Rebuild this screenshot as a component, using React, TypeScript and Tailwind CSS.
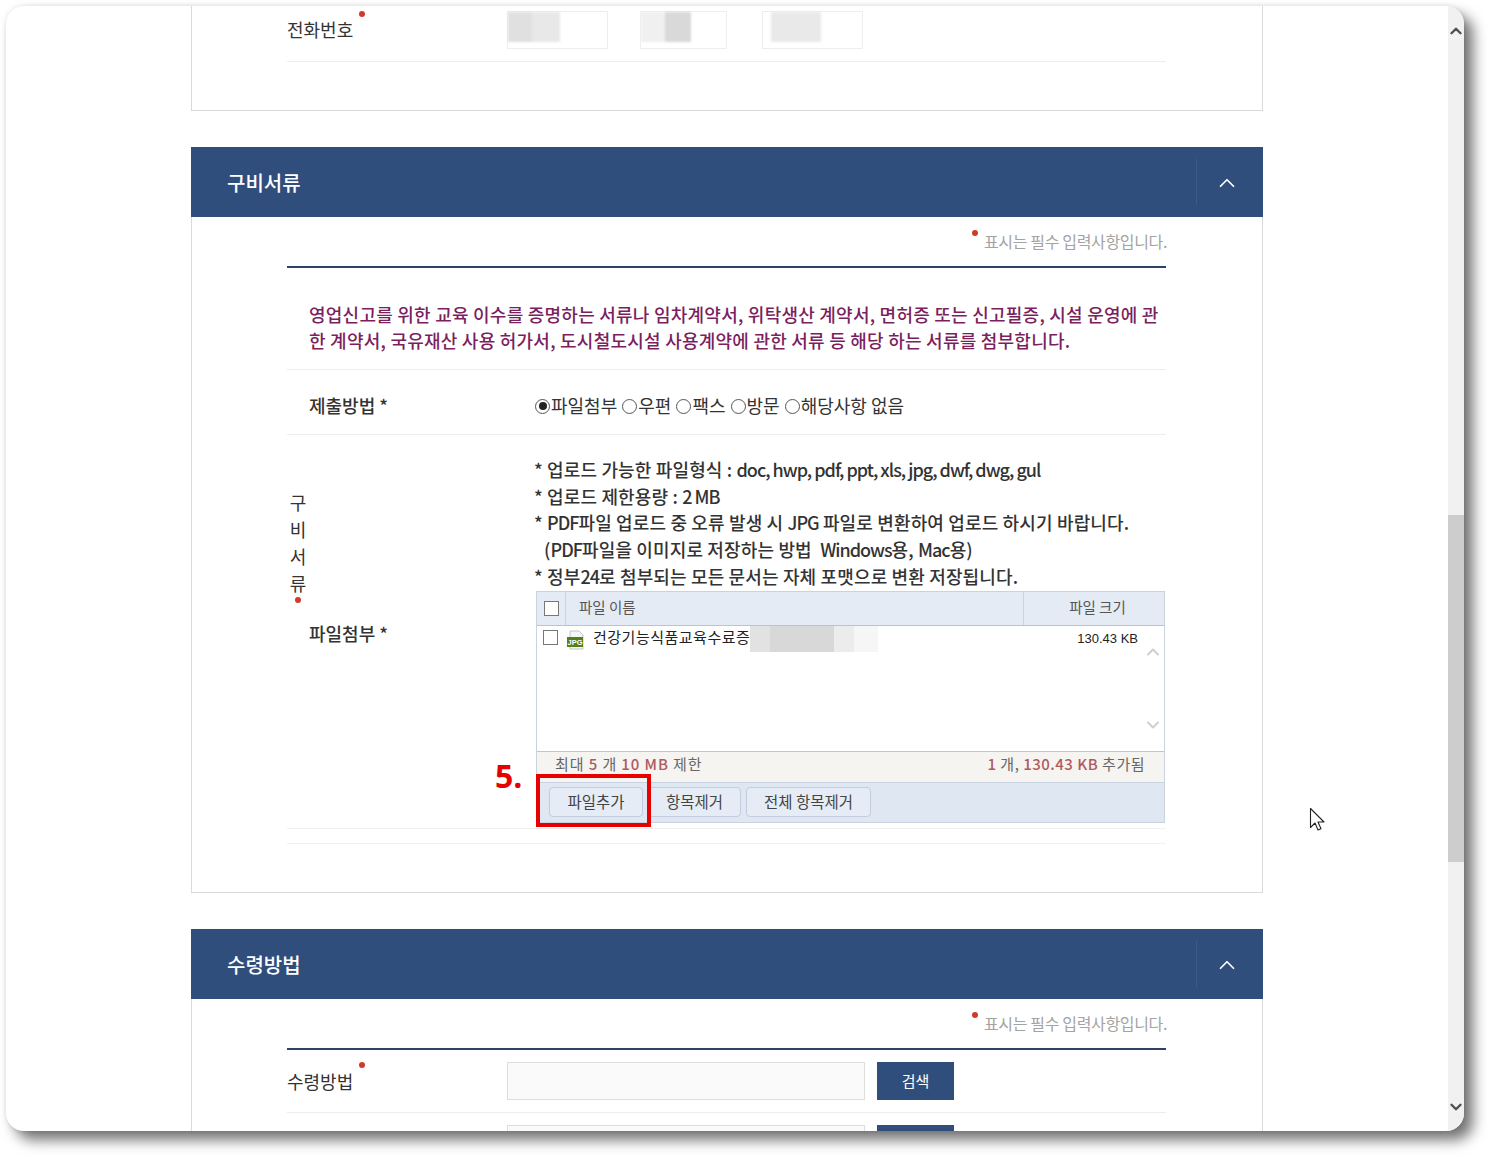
import { ChevronDown, ChevronUp } from "lucide-react";

const fontStack = { fontFamily: '"Noto Sans CJK KR", "Noto Sans", sans-serif' };

function RedDot({ className = "" }: { className?: string }) {
    return <span className={`block h-[6px] w-[6px] rounded-full bg-[#d0392b] ${className}`} />;
}

function SectionHeader({ title }: { title: string }) {
    return (
        <div className="flex h-[70px] items-center justify-between bg-[#304e7c] pl-9">
            <h2 className="pt-[1px] text-[20px] font-medium text-white">{title}</h2>
            <div className="flex h-[46px] w-[67px] items-center justify-center border-l border-[#3d5b89] pr-[7px] pt-[2px]">
                <ChevronUp className="h-[26px] w-[26px] text-white" strokeWidth={1.6} />
            </div>
        </div>
    );
}

function RequiredNote() {
    return (
        <div className="flex h-[51px] items-start justify-end border-b-2 border-[#2c4364] pt-[13px]">
            <RedDot className="mr-[6px]" />
            <span className="-mr-px text-[16px] leading-[22px] tracking-[-0.35px] text-[#a3a3a3]">
                표시는 필수 입력사항입니다.
            </span>
        </div>
    );
}

function Radio({ label, checked = false }: { label: string; checked?: boolean }) {
    return (
        <span className="flex items-center">
            <span className="mt-[2px] flex h-[15px] w-[15px] items-center justify-center rounded-full border border-[#555] bg-white">
                {checked && <span className="h-[8px] w-[8px] rounded-full bg-[#222]" />}
            </span>
            <span className="ml-px">{label}</span>
        </span>
    );
}

function CheckBox() {
    return <span className="block h-[15px] w-[15px] border border-[#777] bg-white" />;
}

function JpgIcon() {
    return (
        <svg width="20" height="20" viewBox="0 0 20 20">
            <path d="M4 1h9l4 4v14H4z" fill="#f6f6f6" stroke="#c4c4c4" />
            <rect x="1" y="7" width="16" height="10" fill="#557f17" />
            <text x="9" y="14.8" textAnchor="middle" fontSize="7.5" fontWeight="700" fill="#fff" fontFamily="Liberation Sans">
                JPG
            </text>
        </svg>
    );
}

function ToolButton({ label, width }: { label: string; width: string }) {
    return (
        <button className={`h-[30px] rounded-[4px] border border-[#c3cddb] bg-[#e6ecf5] text-[15.5px] text-[#444] ${width}`}>
            {label}
        </button>
    );
}

function Latin({ children }: { children: React.ReactNode }) {
    return <span className="tracking-[-1px]">{children}</span>;
}

function FileUploader() {
    return (
        <div className="relative w-[629px] border border-[#c8d2e0] text-[#333]">
            <div className="flex h-[34px] border-b border-[#b9c3d1] bg-[#e4ebf5] text-[14.5px] text-[#555]">
                <div className="flex w-[29px] items-center justify-center border-r border-[#c8d2e0] pl-[1px]">
                    <CheckBox />
                </div>
                <div className="flex flex-1 items-center pb-[3px] pl-[13px]">파일 이름</div>
                <div className="flex w-[141px] items-center justify-center border-l border-[#c8d2e0] pb-[3px] pl-[7px]">
                    파일 크기
                </div>
            </div>
            <div className="relative h-[125px] bg-white">
                <div className="flex items-start pl-[6px] pt-[4px]">
                    <CheckBox />
                    <div className="ml-[8px]">
                        <JpgIcon />
                    </div>
                    <span className="-mt-[3px] ml-[7px] text-[15px] leading-[20px] tracking-[0.5px] text-[#222]">건강기능식품교육수료증</span>
                    <span className="-mt-[4px] flex h-[26px]">
                        <span className="h-full w-[20px] bg-[#e2e2e2]" />
                        <span className="h-full w-[64px] bg-[#d8d8d8]" />
                        <span className="h-full w-[20px] bg-[#ececec]" />
                        <span className="h-full w-[24px] bg-[#f6f6f6]" />
                    </span>
                    <span className="ml-auto -mt-px pr-[26px] text-[13px] leading-[20px] text-[#222]" style={{ fontFamily: "Liberation Sans" }}>
                        130.43 KB
                    </span>
                </div>
                <ChevronUp className="absolute right-[1px] top-[16px] h-[20px] w-[20px] text-[#cfcfcf]" strokeWidth={2.4} />
                <ChevronDown className="absolute right-[1px] top-[89px] h-[20px] w-[20px] text-[#cfcfcf]" strokeWidth={2.4} />
            </div>
            <div className="flex h-[31px] items-center justify-between border-t border-[#c4c4c4] bg-[#f5f4f1] pb-[4px] pl-[18px] pr-[19px] text-[15px] tracking-[0.5px] text-[#666]">
                <span className="tracking-[0.9px]">
                    최대 <b className="font-medium text-[#b05a60]">5</b> 개 <b className="font-medium text-[#b05a60]">10 MB</b> 제한
                </span>
                <span>
                    <b className="font-medium text-[#b05a60]">1</b> 개, <b className="font-medium text-[#b05a60]">130.43 KB</b> 추가됨
                </span>
            </div>
            <div className="flex h-[40px] items-center gap-[5px] border-t border-[#c8d2e0] bg-[#dfe7f3] pb-[1px] pl-[12px]">
                <ToolButton label="파일추가" width="w-[94px]" />
                <ToolButton label="항목제거" width="w-[93px]" />
                <ToolButton label="전체 항목제거" width="w-[125px]" />
            </div>
            {/* annotation over the widget */}
            <div className="absolute -left-px top-[182px] h-[53px] w-[115px] border-[4px] border-[#e60000]" />
            <div
                className="absolute -left-[42px] top-[164px] text-[32px] font-bold leading-[40px] text-[#e60000]"
                style={{ fontFamily: '"Open Sans", sans-serif' }}
            >
                5.
            </div>
        </div>
    );
}

export default function App() {
    return (
        <div className="h-[1159px] w-[1492px] bg-white pl-[6px] pt-[6px]" style={fontStack}>
            <div className="flex h-[1125px] w-[1458px] overflow-hidden rounded-[18px] bg-white shadow-[9px_9px_14px_rgba(0,0,0,0.55),0_0_5px_rgba(0,0,0,0.1)]">
                <main className="flex-1 overflow-hidden pl-[185px]">
                    <div className="w-[1072px]">
                        {/* contact card, cut by the scroll position */}
                        <section className="h-[105px] border-x border-b border-[#d9d9d9] bg-white pl-[95px] pr-[96px]">
                            <div className="flex h-[56px] items-start border-b border-[#eeeeee]">
                                <div className="relative w-[220px] pt-[10px] text-[18px] leading-[26px] text-[#333]">
                                    전화번호
                                    <RedDot className="absolute left-[72px] top-[5px]" />
                                </div>
                                <div className="mt-[5px] flex h-[38px] text-[0px]">
                                    <div className="w-[101px] border border-[#eeeeee] pb-[6px]">
                                        <div className="flex h-full blur-[1px]">
                                            <span className="w-[24px] bg-[#e0e0e0]" />
                                            <span className="w-[28px] bg-[#e8e8e8]" />
                                        </div>
                                    </div>
                                    <div className="ml-[32px] w-[87px] border border-[#eeeeee] pb-[6px]">
                                        <div className="flex h-full blur-[1px]">
                                            <span className="w-[24px] bg-[#f0f0f0]" />
                                            <span className="w-[26px] bg-[#d9d9d9]" />
                                        </div>
                                    </div>
                                    <div className="ml-[35px] w-[101px] border border-[#eeeeee] pb-[6px] pl-[8px]">
                                        <div className="h-full w-[50px] bg-[#e9e9e9] blur-[1px]" />
                                    </div>
                                </div>
                            </div>
                        </section>

                        <section className="mt-[36px]">
                            <SectionHeader title="구비서류" />
                            <div className="h-[676px] border-x border-b border-[#d9d9d9] bg-white pl-[95px] pr-[96px]">
                                <RequiredNote />
                                <p className="h-[102px] border-b border-[#eeeeee] pl-[22px] pt-[33px] text-[18px] font-medium leading-[26px] tracking-[0.24px] text-[#7b1f5f]">
                                    영업신고를 위한 교육 이수를 증명하는 서류나 임차계약서, 위탁생산 계약서, 면허증 또는 신고필증, 시설 운영에 관
                                    <br />
                                    한 계약서, 국유재산 사용 허가서, 도시철도시설 사용계약에 관한 서류 등 해당 하는 서류를 첨부합니다.
                                </p>
                                <div className="flex h-[65px] items-center border-b border-[#eeeeee] pl-[22px] text-[18px] text-[#333]">
                                    <div className="w-[226px] pt-[6px] font-medium">제출방법 *</div>
                                    <div className="flex gap-[5px] pt-[6px]">
                                        <Radio label="파일첨부" checked />
                                        <Radio label="우편" />
                                        <Radio label="팩스" />
                                        <Radio label="방문" />
                                        <Radio label="해당사항 없음" />
                                    </div>
                                </div>

                                <div className="flex h-[394px] border-b border-[#f0f0f0]">
                                    <div className="flex w-[22px] flex-col items-center pt-[54px] text-[18px] leading-[27px] text-[#333]">
                                        <span>구</span>
                                        <span>비</span>
                                        <span>서</span>
                                        <span>류</span>
                                        <RedDot />
                                    </div>
                                    <div className="w-[226px] self-center pt-[4px] text-[18px] font-medium text-[#333]">
                                        파일첨부 *
                                    </div>
                                    <div className="pt-[21px]">
                                        <div className="-ml-px text-[18px] font-medium leading-[26.7px] tracking-[0.15px] text-[#333]">
                                            <p>
                                                * 업로드 가능한 파일형식 : <Latin>doc, hwp, pdf, ppt, xls, jpg, dwf, dwg, gul</Latin>
                                            </p>
                                            <p>
                                                * 업로드 제한용량 : <Latin>2 MB</Latin>
                                            </p>
                                            <p>
                                                * <Latin>PDF</Latin>파일 업로드 중 오류 발생 시 <Latin>JPG</Latin> 파일로 변환하여 업로드 하시기 바랍니다.
                                            </p>
                                            <p className="pl-[10px]">
                                                (<Latin>PDF</Latin>파일을 이미지로 저장하는 방법&nbsp; <Latin>Windows</Latin>용, <Latin>Mac</Latin>용)
                                            </p>
                                            <p>
                                                * 정부<Latin>24</Latin>로 첨부되는 모든 문서는 자체 포맷으로 변환 저장됩니다.
                                            </p>
                                        </div>
                                        <div className="ml-px mt-[1px]">
                                            <FileUploader />
                                        </div>
                                    </div>
                                </div>
                                <div className="h-[15px] border-b border-[#f0f0f0]" />
                            </div>
                        </section>

                        <section className="mt-[36px]">
                            <SectionHeader title="수령방법" />
                            <div className="h-[200px] border-x border-[#d9d9d9] bg-white pl-[95px] pr-[96px]">
                                <RequiredNote />
                                <div className="flex h-[63px] items-start border-b border-[#eeeeee] pt-[12px]">
                                    <div className="relative w-[220px] pt-[6px] text-[18px] leading-[26px] text-[#333]">
                                        수령방법
                                        <RedDot className="absolute left-[72px] top-0" />
                                    </div>
                                    <div className="h-[38px] w-[358px] border border-[#dddddd] bg-[#fafafa]" />
                                    <button className="ml-[12px] h-[38px] w-[77px] bg-[#304e7c] text-[15px] text-white">검색</button>
                                </div>
                                <div className="flex pl-[220px] pt-[12px]">
                                    <div className="h-[38px] w-[358px] border border-[#dddddd] bg-[#fafafa]" />
                                    <button className="ml-[12px] h-[38px] w-[77px] bg-[#304e7c]" />
                                </div>
                            </div>
                        </section>
                    </div>
                </main>

                <aside className="flex w-4 flex-col items-center bg-[#f1f1f1]">
                    <ChevronUp className="mt-[16px] h-[18px] w-[18px] shrink-0 text-[#505050]" strokeWidth={3.2} />
                    <div className="mt-[475px] h-[347px] w-full shrink-0 bg-[#cdcdcd]" />
                    <div className="flex-1" />
                    <ChevronDown className="mb-[15px] h-[18px] w-[18px] shrink-0 text-[#505050]" strokeWidth={3.2} />
                </aside>
            </div>

            {/* mouse pointer caught in the capture */}
            <svg className="absolute left-[1309px] top-[807px]" width="18" height="26" viewBox="0 0 18 26">
                <path d="M1.5 1.5v19l4.5-4.5 3 7 3-1.3-3-6.7h6z" fill="#fff" stroke="#222" strokeWidth="1.1" strokeLinejoin="round" />
            </svg>
        </div>
    );
}
